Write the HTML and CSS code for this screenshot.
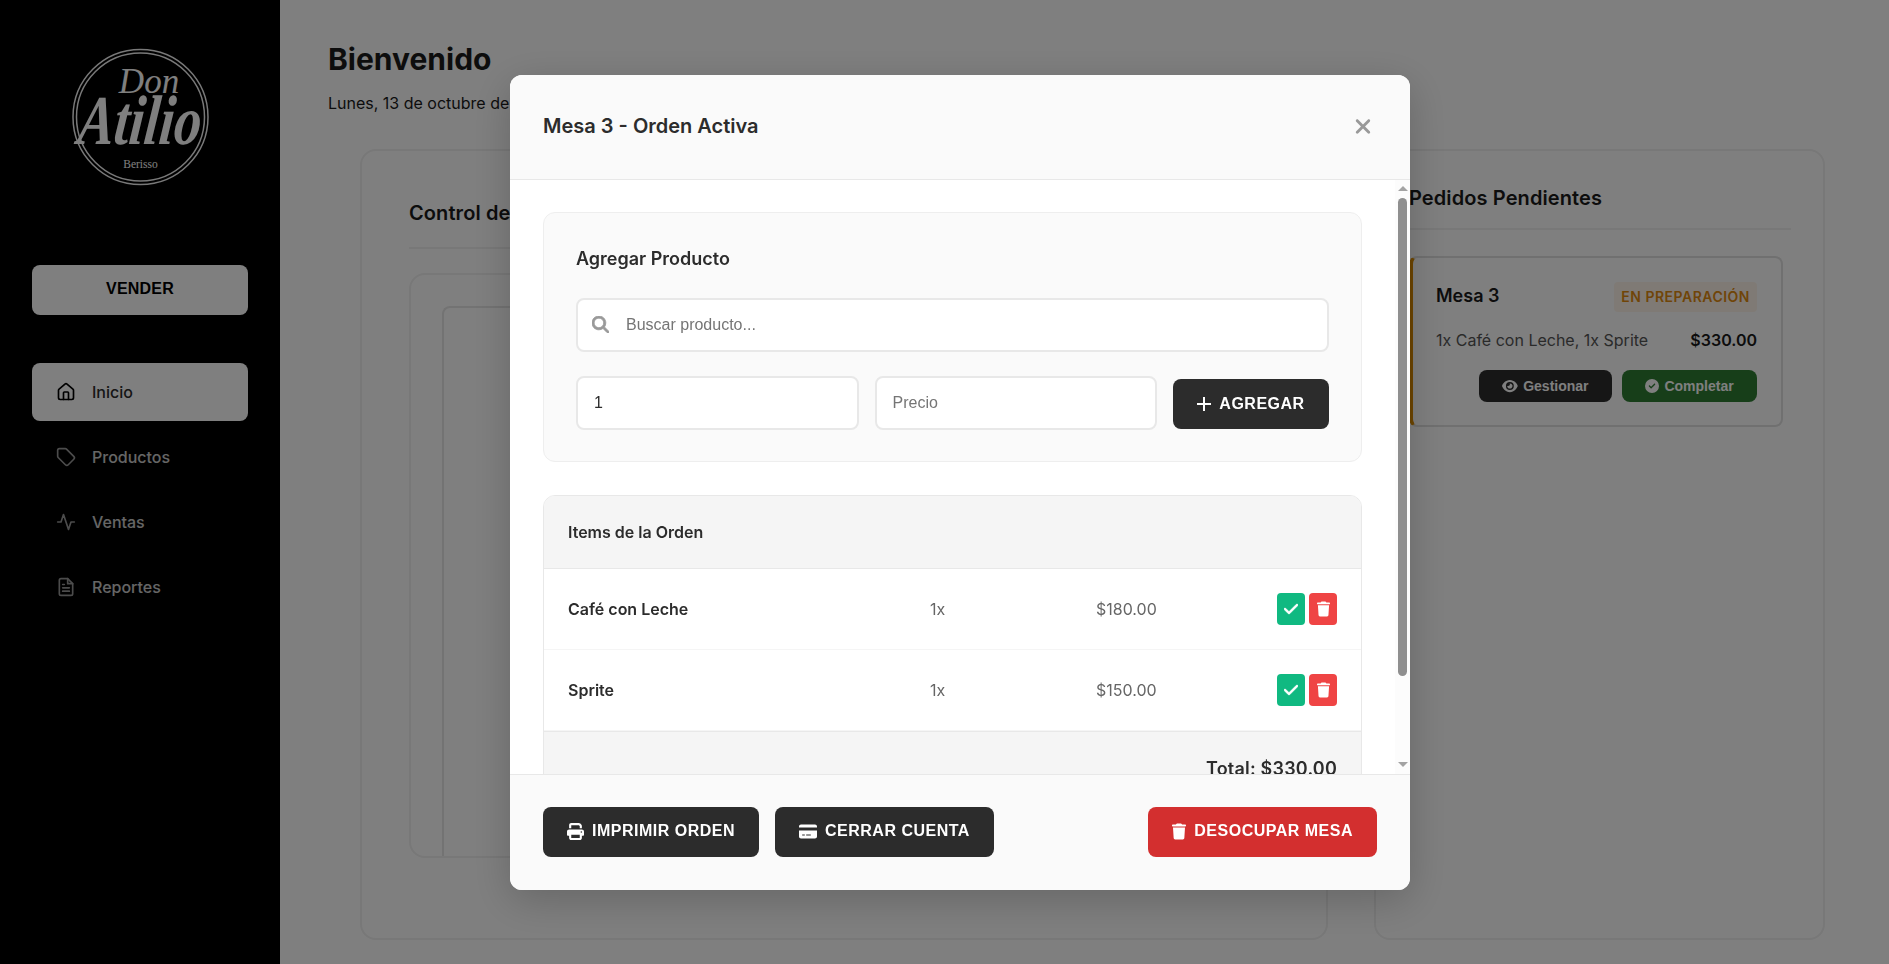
FILE: index.html
```html
<!DOCTYPE html>
<html lang="es">
<head>
<meta charset="utf-8">
<title>Don Atilio</title>
<link rel="stylesheet" href="styles.css">
</head>
<body>
<div class="app">
  <aside class="sidebar">
    <div class="logo">
      <svg class="logo-svg" viewBox="0 0 160 160" width="160" height="160">
        <circle class="ring" cx="80.500" cy="80" r="67.500"/>
        <circle class="ring" cx="80.500" cy="80" r="64"/>
        <text class="logo-don" x="89" y="56" text-anchor="middle">Don</text>
        <text class="logo-name" transform="translate(78 107) skewX(-6) scale(1 1.3)" text-anchor="middle">Atilio</text>
        <text class="logo-city" x="80.500" y="131" text-anchor="middle">Berisso</text>
      </svg>
    </div>
    <button class="sell">VENDER</button>
    <nav class="nav">
      <a class="nav-item active"><svg class="nav-icon" viewBox="0 0 24 24"><path d="M15 21v-8a1 1 0 0 0-1-1h-4a1 1 0 0 0-1 1v8"/><path d="M3 10a2 2 0 0 1 .709-1.528l7-5.999a2 2 0 0 1 2.582 0l7 5.999A2 2 0 0 1 21 10v9a2 2 0 0 1-2 2H5a2 2 0 0 1-2-2z"/></svg>Inicio</a>
      <a class="nav-item"><svg class="nav-icon" viewBox="0 0 24 24"><path d="M12.586 2.586A2 2 0 0 0 11.172 2H4a2 2 0 0 0-2 2v7.172a2 2 0 0 0 .586 1.414l8.704 8.704a2.426 2.426 0 0 0 3.42 0l6.58-6.58a2.426 2.426 0 0 0 0-3.42z"/></svg>Productos</a>
      <a class="nav-item"><svg class="nav-icon" viewBox="0 0 24 24"><path d="M22 12h-4l-3 9L9 3l-3 9H2"/></svg>Ventas</a>
      <a class="nav-item"><svg class="nav-icon" viewBox="0 0 24 24"><path d="M14 2H6a2 2 0 0 0-2 2v16a2 2 0 0 0 2 2h12a2 2 0 0 0 2-2V8z"/><path d="M14 2v6h6M16 13H8M16 17H8M10 9H8"/></svg>Reportes</a>
    </nav>
  </aside>

  <main class="main">
    <h1 class="page-title">Bienvenido</h1>
    <p class="page-date">Lunes, 13 de octubre de 2025</p>
    <div class="columns">
      <section class="card card-left">
        <h2 class="card-title">Control de Mesas</h2>
        <div class="floor"><div class="floor-inner"></div></div>
      </section>
      <section class="card card-right">
        <h2 class="card-title">Pedidos Pendientes</h2>
        <article class="order">
          <div class="order-top">
            <span class="order-name">Mesa 3</span>
            <span class="badge">EN PREPARACIÓN</span>
          </div>
          <div class="order-mid">
            <span class="order-items">1x Café con Leche, 1x Sprite</span>
            <span class="order-total">$330.00</span>
          </div>
          <div class="order-actions">
            <button class="mini mini-dark"><svg class="fa" viewBox="0 0 576 512"><path d="M288 32c-80.800 0-145.500 36.800-192.600 80.600C48.600 156 17.300 208 2.500 243.700c-3.300 7.900-3.300 16.700 0 24.600C17.300 304 48.600 356 95.400 399.400C142.500 443.200 207.200 480 288 480s145.500-36.800 192.600-80.600c46.800-43.500 78.100-95.400 93-131.100c3.300-7.900 3.300-16.700 0-24.600c-14.900-35.700-46.200-87.700-93-131.100C433.500 68.800 368.800 32 288 32zM144 256a144 144 0 1 1 288 0 144 144 0 1 1 -288 0zm144-64c0 35.300-28.700 64-64 64c-7.100 0-13.900-1.200-20.300-3.300c-5.500-1.800-11.900 1.600-11.700 7.400c.3 6.900 1.300 13.800 3.200 20.700c13.700 51.200 66.400 81.600 117.600 67.900s81.600-66.400 67.900-117.600c-11.100-41.500-47.800-69.400-88.600-71.100c-5.800-.2-9.200 6.100-7.400 11.700c2.100 6.400 3.300 13.200 3.300 20.300z"/></svg>Gestionar</button>
            <button class="mini mini-green"><svg class="fa" viewBox="0 0 512 512"><path d="M256 512A256 256 0 1 0 256 0a256 256 0 1 0 0 512zM369 209L241 337c-9.400 9.400-24.600 9.400-33.900 0l-64-64c-9.400-9.400-9.400-24.600 0-33.900s24.600-9.400 33.900 0l47 47L335 175c9.400-9.400 24.600-9.400 33.900 0s9.400 24.600 0 33.900z"/></svg>Completar</button>
          </div>
        </article>
      </section>
    </div>
  </main>
</div>

<div class="overlay">
  <div class="modal">
    <header class="modal-head">
      <h3 class="modal-title">Mesa 3 - Orden Activa</h3>
      <svg class="close" viewBox="0 0 384 512"><path d="M342.600 150.600c12.500-12.500 12.500-32.800 0-45.300s-32.800-12.500-45.300 0L192 210.700 86.600 105.400c-12.500-12.500-32.800-12.500-45.300 0s-12.500 32.800 0 45.300L146.700 256 41.400 361.400c-12.500 12.500-12.500 32.800 0 45.300s32.800 12.500 45.300 0L192 301.300 297.400 406.600c12.500 12.500 32.800 12.500 45.300 0s12.500-32.800 0-45.300L237.300 256 342.600 150.600z"/></svg>
    </header>
    <div class="modal-body">
      <div class="modal-content">
        <section class="add">
          <h4 class="add-title">Agregar Producto</h4>
          <div class="search">
            <svg class="search-icon" viewBox="0 0 512 512"><path d="M416 208c0 45.900-14.900 88.300-40 122.700L502.600 457.400c12.500 12.500 12.500 32.800 0 45.300s-32.800 12.500-45.300 0L330.700 376c-34.400 25.200-76.800 40-122.700 40C93.100 416 0 322.900 0 208S93.100 0 208 0S416 93.100 416 208zM208 352a144 144 0 1 0 0-288 144 144 0 1 0 0 288z"/></svg>
            <input class="search-input" type="text" placeholder="Buscar producto...">
          </div>
          <div class="add-row">
            <input class="field" type="text" value="1">
            <input class="field" type="text" placeholder="Precio">
            <button class="btn btn-dark btn-add"><svg class="plus" viewBox="0 0 14 14"><path d="M7 0v14M0 7h14"/></svg>AGREGAR</button>
          </div>
        </section>
        <section class="items">
          <div class="items-head">Items de la Orden</div>
          <div class="item">
            <span class="item-name">Café con Leche</span>
            <span class="item-num">1x</span>
            <span class="item-num">$180.00</span>
            <span class="item-actions">
              <span class="act act-ok"><svg class="fa-s" viewBox="0 0 448 512"><path d="M438.600 105.400c12.500 12.500 12.500 32.800 0 45.300l-256 256c-12.500 12.500-32.800 12.500-45.300 0l-128-128c-12.500-12.500-12.500-32.800 0-45.300s32.800-12.500 45.300 0L160 338.700 393.400 105.400c12.500-12.500 32.800-12.500 45.300 0z"/></svg></span>
              <span class="act act-del"><svg class="fa-s" viewBox="0 0 448 512"><path d="M135.200 17.700L128 32H32C14.300 32 0 46.300 0 64S14.300 96 32 96H416c17.700 0 32-14.300 32-32s-14.300-32-32-32H320l-7.200-14.300C307.400 6.800 296.300 0 284.200 0H163.800c-12.100 0-23.200 6.800-28.600 17.700zM416 128H32L53.200 467c1.600 25.300 22.600 45 47.900 45H346.900c25.300 0 46.300-19.700 47.900-45L416 128z"/></svg></span>
            </span>
          </div>
          <div class="item">
            <span class="item-name">Sprite</span>
            <span class="item-num">1x</span>
            <span class="item-num">$150.00</span>
            <span class="item-actions">
              <span class="act act-ok"><svg class="fa-s" viewBox="0 0 448 512"><path d="M438.600 105.400c12.500 12.500 12.500 32.800 0 45.300l-256 256c-12.500 12.500-32.800 12.500-45.300 0l-128-128c-12.500-12.500-12.500-32.800 0-45.300s32.800-12.500 45.300 0L160 338.700 393.400 105.400c12.500-12.500 32.800-12.500 45.300 0z"/></svg></span>
              <span class="act act-del"><svg class="fa-s" viewBox="0 0 448 512"><path d="M135.200 17.700L128 32H32C14.300 32 0 46.300 0 64S14.300 96 32 96H416c17.700 0 32-14.300 32-32s-14.300-32-32-32H320l-7.200-14.300C307.400 6.800 296.300 0 284.200 0H163.800c-12.100 0-23.200 6.800-28.600 17.700zM416 128H32L53.200 467c1.600 25.300 22.600 45 47.900 45H346.900c25.300 0 46.300-19.700 47.900-45L416 128z"/></svg></span>
            </span>
          </div>
          <div class="items-total">Total: $330.00</div>
        </section>
      </div>
      <div class="scrollbar">
        <span class="arrow arrow-up"></span>
        <span class="thumb"></span>
        <span class="track-gap"></span>
        <span class="arrow arrow-down"></span>
      </div>
    </div>
    <footer class="modal-foot">
      <button class="btn btn-dark"><svg class="fa-b" viewBox="0 0 512 512"><path d="M128 0C92.700 0 64 28.700 64 64v96h64V64H354.700L384 93.300V160h64V93.300c0-17-6.700-33.300-18.700-45.300L400 18.700C388 6.700 371.700 0 354.700 0H128zM384 352v32 64H128V384 368 352H384zm64 32h32c17.700 0 32-14.300 32-32V256c0-35.300-28.700-64-64-64H64c-35.300 0-64 28.700-64 64v96c0 17.700 14.300 32 32 32H64v64c0 35.300 28.700 64 64 64H384c35.300 0 64-28.700 64-64V384zM432 248a24 24 0 1 1 0 48 24 24 0 1 1 0-48z"/></svg>IMPRIMIR ORDEN</button>
      <button class="btn btn-dark"><svg class="fa-c" viewBox="0 0 576 512"><path d="M64 32C28.700 32 0 60.700 0 96v32H576V96c0-35.300-28.700-64-64-64H64zM576 224H0V416c0 35.300 28.700 64 64 64H512c35.300 0 64-28.700 64-64V224zM112 352h64c8.800 0 16 7.200 16 16s-7.200 16-16 16H112c-8.800 0-16-7.200-16-16s7.200-16 16-16zm112 16c0-8.800 7.200-16 16-16H368c8.800 0 16 7.200 16 16s-7.200 16-16 16H240c-8.800 0-16-7.200-16-16z"/></svg>CERRAR CUENTA</button>
      <button class="btn btn-red"><svg class="fa-t" viewBox="0 0 448 512"><path d="M135.200 17.700L128 32H32C14.300 32 0 46.300 0 64S14.300 96 32 96H416c17.700 0 32-14.300 32-32s-14.300-32-32-32H320l-7.200-14.300C307.400 6.800 296.300 0 284.200 0H163.800c-12.100 0-23.200 6.800-28.600 17.700zM416 128H32L53.200 467c1.600 25.300 22.600 45 47.900 45H346.900c25.300 0 46.300-19.700 47.900-45L416 128z"/></svg>DESOCUPAR MESA</button>
    </footer>
  </div>
</div>
</body>
</html>
```
FILE: styles.css
```css
* { box-sizing: border-box; }
html, body { margin: 0; height: 964px; overflow: hidden; }
body { font-family: "Inter", "Liberation Sans", sans-serif; color: #1a1a1a; background: #fff; }
h1, h2, h3, h4, p { margin: 0; }
button { border: 0; font-family: "Liberation Sans", Arial, sans-serif; }

.app { display: flex; height: 964px; }
.sidebar { width: 280px; flex: none; background: #000; padding: 37px 32px 0; display: flex; flex-direction: column; }
.logo { display: flex; justify-content: center; height: 160px; margin-bottom: 68px; }
.logo-svg { flex: none; }
.ring { fill: none; stroke: #fff; stroke-width: 1.500; opacity: .95; }
.logo-don { font: italic 35px "Liberation Serif", serif; fill: #fff; }
.logo-name { font: italic 700 54px "Liberation Serif", serif; fill: #fff; }
.logo-city { font: 11.500px "Liberation Serif", serif; fill: #fff; }
.sell { height: 50px; background: #fff; color: #000; border-radius: 8px; font-size: 16px; font-weight: 700; padding: 0 0 3px; letter-spacing: .2px; }
.nav { display: flex; flex-direction: column; gap: 7px; margin-top: 48px; }
.nav-item { display: flex; align-items: center; height: 58px; padding: 0 24px; gap: 16px; border-radius: 8px; color: #fff; font-size: 16px; font-weight: 500; opacity: .8; }
.nav-item.active { background: #fff; color: #2c2c2c; opacity: 1; }
.nav-icon { width: 20px; height: 20px; fill: none; stroke: currentColor; stroke-width: 2; stroke-linecap: round; stroke-linejoin: round; flex: none; opacity: .75; }
.nav-item.active .nav-icon { opacity: 1; stroke: #000; }

.main { flex: 1; padding: 41px 14px 0 48px; min-width: 0; }
.page-title { font-size: 30px; line-height: 36px; font-weight: 700; color: #1a1a1a; }
.page-date { font-size: 16px; line-height: 24px; margin-top: 14px; color: #1a1a1a; }
.columns { display: grid; grid-template-columns: 968px 451px; gap: 46px; margin: 34px 0 0 32px; }
.card { height: 791px; border: 2px solid #f0f0f0; border-radius: 16px; background: #fff; }
.card-left { padding: 48px 46px 0 47px; }
.card-right { padding: 33px 32px 0 33px; }
.card-title { font-size: 20px; line-height: 28px; font-weight: 600; letter-spacing: .1px; padding-bottom: 16px; border-bottom: 2px solid #f0f0f0; }
.card-left .card-title { padding-bottom: 20px; }
.floor { height: 585px; margin-top: 24px; border: 2px solid #f0f0f0; border-radius: 16px; padding: 31px 0 0 31px; }
.floor-inner { height: 100%; border: 2px solid #e6e6e6; border-bottom: 0; border-right: 0; border-radius: 8px 0 0 0; }
.order { margin: 26px 8px 0 0; height: 171px; border: 2px solid #e0e0e0; border-left: 4px solid #d98a00; border-radius: 8px; padding: 24px 24px 0 23px; }
.order-top, .order-mid { display: flex; justify-content: space-between; align-items: center; }
.order-name { font-size: 18px; font-weight: 600; color: #1a1a1a; padding-bottom: 3px; }
.badge { background: #fff5eb; color: #e08a10; font-size: 14px; font-weight: 600; padding: 0 7px; height: 30px; line-height: 30px; border-radius: 4px; letter-spacing: .5px; }
.order-mid { margin-top: 18px; font-size: 16px; line-height: 20px; }
.order-items { color: #555; }
.order-total { font-weight: 600; }
.order-actions { display: flex; justify-content: flex-end; gap: 10px; margin-top: 20px; }
.mini { display: flex; align-items: center; justify-content: center; gap: 5px; height: 32px; border-radius: 8px; color: #fff; font-size: 14px; font-weight: 700; }
.mini-dark { width: 133px; background: #2c2c2c; }
.mini-green { width: 135px; background: #2e7d32; }
.fa { height: 14px; width: auto; fill: currentColor; }

.overlay { position: fixed; inset: 0; background: rgba(0, 0, 0, .5); display: flex; justify-content: center; padding: 75px 0 0 31px; }
.modal { width: 900px; height: 815px; background: #fff; border-radius: 12px; box-shadow: 0 10px 40px rgba(0, 0, 0, .2); display: flex; flex-direction: column; overflow: hidden; color: #2c2c2c; }
.modal-head { height: 105px; flex: none; display: flex; justify-content: space-between; align-items: center; padding: 0 38px 2px 33px; background: #fafafa; border-bottom: 1px solid #e8e8e8; }
.modal-title { font-size: 20px; font-weight: 600; line-height: 28px; }
.close { width: 18px; height: 23px; fill: #999; }
.modal-body { flex: 1; min-height: 0; display: flex; }
.modal-content { flex: 1; min-width: 0; overflow: hidden; padding: 32px 33px 0; }
.scrollbar { width: 15px; flex: none; display: flex; flex-direction: column; align-items: center; padding: 6px 0 7px; background: #fcfcfc; }
.arrow { width: 0; height: 0; border-left: 5px solid transparent; border-right: 5px solid transparent; flex: none; }
.arrow-up { border-bottom: 5px solid #a3a3a3; }
.arrow-down { border-top: 5px solid #a3a3a3; }
.thumb { width: 9px; height: 478px; margin-top: 7px; background: #8f8f8f; border-radius: 5px; flex: none; }
.track-gap { flex: 1; }

.add { height: 250px; background: #fafafa; border: 1px solid #eee; border-radius: 12px; padding: 32px; }
.add-title { font-size: 18px; font-weight: 600; line-height: 26px; padding-top: 1px; }
.search { position: relative; margin-top: 26px; }
.search-icon { position: absolute; left: 16px; top: 18px; width: 17px; height: 17px; fill: #999; stroke: #999; stroke-width: 24; }
.search-input, .field { display: block; width: 100%; height: 54px; border: 2px solid #e8e8e8; border-radius: 8px; background: #fff; font: 16px "Liberation Sans", Arial, sans-serif; color: #2c2c2c; outline: 0; }
.search-input { padding: 0 16px 0 48px; }
.field { padding: 0 16px; min-width: 0; }
.add-row { display: grid; grid-template-columns: 1fr 1fr 156px; gap: 16px; margin-top: 24px; align-items: start; }
.btn { display: inline-flex; align-items: center; justify-content: center; height: 50px; padding: 0 24px 2px; gap: 8px; border-radius: 8px; color: #fff; font-size: 16px; font-weight: 700; letter-spacing: .5px; white-space: nowrap; flex: none; }
.btn-dark { background: #2c2c2c; }
.btn-red { background: #d32f2f; margin-left: auto; }
.btn-add { margin-top: 3px; padding: 0; width: 156px; }
.plus { width: 14px; height: 14px; fill: none; stroke: #fff; stroke-width: 2; }
.fa-b { width: 17px; height: 17px; fill: #fff; }
.fa-c { width: 18px; height: 17px; fill: #fff; }
.fa-t { width: 14px; height: 17px; fill: #fff; }

.items { margin-top: 33px; border: 1px solid #e8e8e8; border-radius: 12px; overflow: hidden; }
.items-head { height: 73px; background: #f5f5f5; border-bottom: 1px solid #e8e8e8; display: flex; align-items: center; padding: 0 24px; font-size: 16px; font-weight: 600; }
.item { height: 81px; display: grid; grid-template-columns: 362px 166px 181px 60px; align-items: center; padding: 0 24px; border-bottom: 1px solid #f5f5f5; background: #fff; }
.item-name { font-size: 16px; font-weight: 600; }
.item-num { font-size: 16px; color: #666; }
.item-actions { display: flex; justify-content: space-between; }
.act { width: 28px; height: 32px; border-radius: 4px; display: flex; align-items: center; justify-content: center; }
.act-ok { background: #10b981; }
.act-del { background: #ef4444; }
.fa-s { width: 13px; height: 16px; fill: #fff; }
.act-ok .fa-s { width: 14px; stroke: #fff; stroke-width: 16; }
.items-total { height: 80px; background: #f5f5f5; border-top: 1px solid #e8e8e8; text-align: right; padding: 26px 24px 0; font-size: 18px; font-weight: 600; letter-spacing: .2px; }

.modal-foot { height: 116px; flex: none; display: flex; align-items: flex-start; gap: 16px; padding: 32px 33px 0; background: #fafafa; border-top: 1px solid #e8e8e8; }
```
